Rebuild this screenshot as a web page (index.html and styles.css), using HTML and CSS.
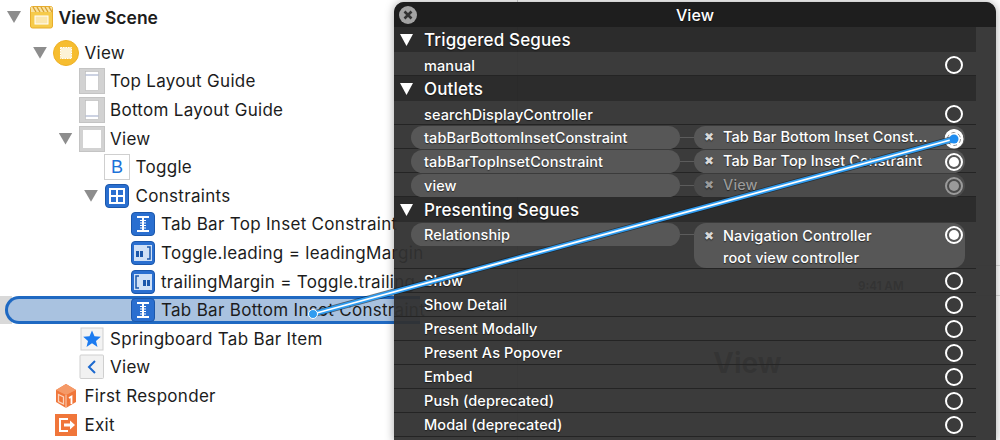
FILE: index.html
```html
<!DOCTYPE html>
<html lang="en">
<head>
<meta charset="utf-8">
<title>View Scene</title>
<link rel="stylesheet" href="styles.css">
</head>
<body>
<main class="stage">
  <div class="canvas">
    <span class="canvas-line"></span>
    <span class="canvas-bar"></span>
    <span class="canvas-time">9:41 AM</span>
    <span class="canvas-title">View</span>
  </div>

  <ul class="tree">
    <li class="node level-0 scene">
      <span class="tri"></span>
      <svg class="ico" viewBox="0 0 26 26"><rect x="3.5" y="2.5" width="22" height="21.5" rx="2" fill="#f6cb4b" stroke="#e8ad2c"/><path d="M4 3h21v5H4z" fill="#f9e3a0"/><path d="M6 3l3 5M10 3l3 5M14 3l3 5M18 3l3 5M22 3l3 5" stroke="#d9a032" stroke-width="1.4"/><rect x="8" y="12" width="13" height="8" fill="#fbe7ae" stroke="#fff"/></svg>
      <span class="label">View Scene</span>
    </li>
    <li class="node level-1">
      <span class="tri"></span>
      <svg class="ico" viewBox="0 0 26 26"><circle cx="13" cy="13" r="12.5" fill="#f6bd30" stroke="#eeb024"/><rect x="7.5" y="7.5" width="11" height="11" fill="#fdf3d6" stroke="#fff" stroke-dasharray="1.5 1"/></svg>
      <span class="label">View</span>
    </li>
    <li class="node level-2">
      <span class="slot"></span>
      <svg class="ico" viewBox="0 0 26 26"><rect x="0.5" y="0.5" width="25" height="25" fill="#d2d2d2" stroke="#c4c4c4"/><rect x="6.5" y="3.5" width="13" height="19" fill="#fff" stroke="#b9b9b9" stroke-width=".6"/><path d="M6.5 7h13" stroke="#a9b4cf" stroke-width="1.2"/></svg>
      <span class="label">Top Layout Guide</span>
    </li>
    <li class="node level-2">
      <span class="slot"></span>
      <svg class="ico" viewBox="0 0 26 26"><rect x="0.5" y="0.5" width="25" height="25" fill="#d2d2d2" stroke="#c4c4c4"/><rect x="6.5" y="3.5" width="13" height="19" fill="#fff" stroke="#b9b9b9" stroke-width=".6"/><path d="M6.5 19h13" stroke="#a9b4cf" stroke-width="1.2"/></svg>
      <span class="label">Bottom Layout Guide</span>
    </li>
    <li class="node level-2">
      <span class="tri"></span>
      <svg class="ico" viewBox="0 0 26 26"><rect x="0.5" y="0.5" width="25" height="25" fill="#d2d2d2" stroke="#c4c4c4"/><rect x="4" y="4" width="18" height="18" fill="#fff"/></svg>
      <span class="label">View</span>
    </li>
    <li class="node level-3">
      <span class="slot"></span>
      <span class="button-ico">B</span>
      <span class="label">Toggle</span>
    </li>
    <li class="node level-3">
      <span class="tri"></span>
      <svg class="ico" viewBox="0 0 26 26"><rect x="1.5" y="1.5" width="23" height="23" rx="3.5" fill="#2a6fd0" stroke="#1b57ab"/><rect x="5" y="5" width="16" height="16" fill="#fff"/><path d="M7 7h5v5H7zM14 7h5v5h-5zM7 14h5v5H7zM14 14h5v5h-5z" fill="#2a6fd0"/></svg>
      <span class="label">Constraints</span>
    </li>
    <li class="node level-4">
      <span class="slot"></span>
      <svg class="ico" viewBox="0 0 26 26"><rect x="1.5" y="1.5" width="23" height="23" rx="3.5" fill="#2a6fd0" stroke="#1b57ab"/><path d="M7 6h12M7 20h12M13 6v14" stroke="#fff" stroke-width="2"/><path d="M10 9.500h6M10 12h6M10 14.500h6M10 17h6" stroke="#fff" stroke-width="1"/></svg>
      <span class="label">Tab Bar Top Inset Constraint</span>
    </li>
    <li class="node level-4">
      <span class="slot"></span>
      <svg class="ico" viewBox="0 0 26 26"><rect x="1.500" y="1.500" width="23" height="23" rx="3.500" fill="#2a6fd0" stroke="#1b57ab"/><rect x="4" y="5" width="18" height="16" fill="#cfe0f6"/><path d="M17 7h3v12h-3" fill="none" stroke="#1b57ab" stroke-width="1.500"/><rect x="6" y="11" width="3" height="6" fill="#1b57ab"/><rect x="10" y="11" width="3" height="6" fill="#1b57ab"/></svg>
      <span class="label">Toggle.leading = leadingMargin</span>
    </li>
    <li class="node level-4">
      <span class="slot"></span>
      <svg class="ico" viewBox="0 0 26 26"><rect x="1.500" y="1.500" width="23" height="23" rx="3.500" fill="#2a6fd0" stroke="#1b57ab"/><rect x="4" y="5" width="18" height="16" fill="#cfe0f6"/><path d="M9 7H6v12h3" fill="none" stroke="#1b57ab" stroke-width="1.500"/><rect x="13" y="11" width="3" height="6" fill="#1b57ab"/><rect x="17" y="11" width="3" height="6" fill="#1b57ab"/></svg>
      <span class="label">trailingMargin = Toggle.trailing</span>
    </li>
    <li class="node level-4 selected">
      <span class="slot"></span>
      <svg class="ico" viewBox="0 0 26 26"><rect x="1.500" y="1.500" width="23" height="23" rx="3.500" fill="#2a6fd0" stroke="#1b57ab"/><path d="M7 6h12M7 20h12M13 6v14" stroke="#fff" stroke-width="2"/><path d="M10 9.500h6M10 12h6M10 14.500h6M10 17h6" stroke="#fff" stroke-width="1"/></svg>
      <span class="label">Tab Bar Bottom Inset Constraint</span>
    </li>
    <li class="node level-2">
      <span class="slot"></span>
      <svg class="ico" viewBox="0 0 26 26"><rect x="2" y="2" width="22" height="22" fill="#f3f3f3" stroke="#cfcfcf"/><path d="M13 4.500l2.500 5.800 6.300.5-4.800 4.100 1.500 6.100L13 17.300l-5.500 3.700L9 14.900l-4.800-4.100 6.300-.5z" fill="#1b7bf0"/></svg>
      <span class="label">Springboard Tab Bar Item</span>
    </li>
    <li class="node level-2">
      <span class="slot"></span>
      <svg class="ico" viewBox="0 0 26 26"><rect x="1" y="1" width="23.500" height="23.500" rx="1" fill="#f1f1f1" stroke="#cfcfcf"/><path d="M16 7l-6 6 6 6" fill="none" stroke="#1c69cf" stroke-width="2"/></svg>
      <span class="label">View</span>
    </li>
    <li class="node level-1">
      <span class="slot"></span>
      <svg class="ico" viewBox="0 0 26 26"><path d="M3 7l10-6 10 6v12l-10 6-10-6z" fill="#f0763a"/><path d="M3 7l10 5 10-5-10-6z" fill="#f59a68"/><path d="M13 12v13" stroke="#fbd3bb"/><path d="M5.500 11.500l5 2.500v7l-5-2.500z" fill="none" stroke="#fbd3bb" stroke-width="1.300"/><path d="M16 15l2.500-1.500v7.500" fill="none" stroke="#fff" stroke-width="1.800"/></svg>
      <span class="label">First Responder</span>
    </li>
    <li class="node level-1">
      <span class="slot"></span>
      <svg class="ico" viewBox="0 0 26 26"><rect x="2" y="2" width="22" height="22" fill="#f0763a"/><path d="M15 7H7v12h8" fill="none" stroke="#fff" stroke-width="2"/><path d="M11 13h7" stroke="#fff" stroke-width="3"/><path d="M17 8.500l5 4.500-5 4.500z" fill="#fff"/></svg>
      <span class="label">Exit</span>
    </li>
  </ul>

  <section class="panel">
    <header class="panel-title">
      <span class="close"><svg viewBox="0 0 18 18"><circle cx="9" cy="9" r="9" fill="#a3a3a3"/><path d="M5.500 5.500l7 7M12.500 5.500l-7 7" stroke="#333" stroke-width="2.600"/></svg></span>
      <span>View</span>
    </header>
    <div class="list">
      <h2 class="section"><span class="tri-w"></span>Triggered Segues</h2>
      <div class="row upper"><span class="name">manual</span><span class="dot"></span></div>

      <h2 class="section"><span class="tri-w"></span>Outlets</h2>
      <div class="row upper"><span class="name">searchDisplayController</span><span class="dot"></span></div>
      <div class="row upper">
        <span class="name pill">tabBarBottomInsetConstraint</span><span class="wire"></span>
        <span class="target"><span class="x">✖</span><span class="t-label">Tab Bar Bottom Inset Const...</span><span class="dot on"></span></span>
      </div>
      <div class="row upper">
        <span class="name pill">tabBarTopInsetConstraint</span><span class="wire"></span>
        <span class="target"><span class="x">✖</span><span class="t-label">Tab Bar Top Inset Constraint</span><span class="dot on"></span></span>
      </div>
      <div class="row upper">
        <span class="name pill">view</span><span class="wire"></span>
        <span class="target dim"><span class="x">✖</span><span class="t-label">View</span><span class="dot on"></span></span>
      </div>

      <h2 class="section"><span class="tri-w"></span>Presenting Segues</h2>
      <div class="row upper tall">
        <span class="name pill">Relationship</span><span class="wire"></span>
        <span class="target two"><span class="x">✖</span><span class="t-label">Navigation Controller<br>root view controller</span><span class="dot on"></span></span>
      </div>
      <div class="row"><span class="name">Show</span><span class="dot"></span></div>
      <div class="row"><span class="name">Show Detail</span><span class="dot"></span></div>
      <div class="row"><span class="name">Present Modally</span><span class="dot"></span></div>
      <div class="row"><span class="name">Present As Popover</span><span class="dot"></span></div>
      <div class="row"><span class="name">Embed</span><span class="dot"></span></div>
      <div class="row"><span class="name">Push (deprecated)</span><span class="dot"></span></div>
      <div class="row"><span class="name">Modal (deprecated)</span><span class="dot"></span></div>
      <div class="row"></div>
    </div>
  </section>

  <svg class="connection" viewBox="0 0 1000 440">
    <circle cx="954" cy="139" r="9.500" fill="#fff"/>
    <circle cx="954" cy="139" r="6.500" fill="none" stroke="#8f8f8f" stroke-width="1" stroke-dasharray="4 2.800"/>
    <path d="M313 314L954 139" stroke="#0d1a26" stroke-opacity=".6" stroke-width="6.500"/>
    <path d="M313 314L954 139" stroke="#2f9cf0" stroke-width="5"/>
    <path d="M313 314L954 139" stroke="#fff" stroke-width="1.800"/>
    <circle cx="313" cy="314" r="4.500" fill="#2f9cf0" stroke="#fff" stroke-width="1"/>
    <circle cx="954" cy="139" r="4.500" fill="#1f8df0"/>
  </svg>
</main>
</body>
</html>
```

FILE: styles.css
```css
* { box-sizing: border-box; }
html, body { margin: 0; padding: 0; background: #fff; }
body { font-family: Inter, "Liberation Sans", sans-serif; color: #1c1c1c; }

.stage { position: relative; width: 1000px; height: 440px; overflow: hidden; }

/* scene canvas lying behind the translucent panel */
.canvas { position: absolute; inset: 0; }
.canvas-line { position: absolute; left: 517px; top: 0; width: 1px; height: 440px; background: #d0d0d0; }
.canvas-bar { position: absolute; left: 517px; right: 0; top: 265px; height: 31px; border: solid #dcdcdc; border-width: 1px 0; }
.canvas-time { position: absolute; left: 858px; top: 279px; font-size: 11.5px; font-weight: 700; color: rgba(0, 0, 0, .6); }
.canvas-title { position: absolute; left: 713px; top: 346px; font-size: 28px; font-weight: 700; color: rgba(0, 0, 0, .55); }

/* outline tree */
.tree { position: relative; width: 420px; list-style: none; margin: 0; padding: 0; white-space: nowrap; font-size: 17px; letter-spacing: .3px; }
.node { display: flex; align-items: center; height: 28.6px; }
.scene { height: 34px; margin-bottom: 4.5px; font-size: 17.5px; font-weight: 600; letter-spacing: 0; }
.level-0 { padding-left: 1px; }
.level-1 { padding-left: 27px; }
.level-2 { padding-left: 52.5px; }
.level-3 { padding-left: 78px; }
.level-4 { padding-left: 103.5px; }

.tri, .slot { flex: none; width: 26px; }
.tri { height: 12px; }
.tri::before {
  content: ""; display: block; width: 14px; height: 12px; margin-left: 6px;
  background: #8d8d8d; clip-path: polygon(0 0, 100% 0, 50% 100%);
}
.ico { flex: none; width: 26px; height: 26px; }
.button-ico {
  flex: none; width: 26px; height: 26px; border: 1px solid #cfcfcf; background: #fff;
  color: #1c72d8; font: 18px/24px "Liberation Sans", sans-serif; text-align: center; letter-spacing: 0;
}
.label { margin-left: 5.5px; }

.selected { position: relative; isolation: isolate; background: linear-gradient(#d9d9d9, #d9d9d9) left / 12px 100% no-repeat; }
.selected::before {
  content: ""; position: absolute; inset: 0 0 0 5px; z-index: -1;
  background: #a9c2e0; border: 3px solid #1f69c2; border-right: 0; border-radius: 14px 0 0 14px;
}

/* connections inspector popover */
.panel {
  position: absolute; left: 394px; top: 2px; width: 602px; height: 440px;
  border-radius: 10px 10px 0 0; overflow: hidden;
  background: rgba(48, 48, 48, .95); color: #fff;
  box-shadow: 0 0 10px rgba(0, 0, 0, .35);
  font-size: 14.5px; letter-spacing: .1px; text-shadow: 0 1px 1px rgba(0, 0, 0, .55);
}
.panel-title {
  position: relative; height: 25px; display: flex; align-items: center; justify-content: center;
  background: #1e1e1e; font-size: 16px; font-weight: 500;
}
.close { position: absolute; left: 5px; top: 4px; width: 18px; height: 18px; }
.close svg { display: block; width: 18px; height: 18px; }

.list { margin-right: 20px; }
.section {
  display: flex; align-items: center; gap: 11px; height: 25px; margin: 0; padding: 1px 0 0 6px;
  background: rgba(0, 0, 0, .25); font-size: 17px; font-weight: 500; letter-spacing: .15px;
}
.tri-w { width: 13px; height: 12px; background: #fff; clip-path: polygon(0 0, 100% 0, 50% 100%); }

.row {
  display: flex; align-items: center; height: 24px; padding: 0 13px 0 17px;
  border-bottom: 1px solid #242424; white-space: nowrap;
}
.row.upper { padding-top: 1px; }
.row.tall { height: 47px; align-items: flex-start; }
.name { width: 269px; height: 23px; line-height: 23px; padding-left: 13px; font-weight: 500; border-radius: 11.500px; }
.upper .name { line-height: 25px; }
.upper .pill { line-height: 24px; }
.pill { background: #575757; }
.wire { width: 14px; height: 1px; background: #5c5c5c; }
.row.tall .wire { margin-top: 11px; }
.target {
  display: flex; align-items: center; width: 271px; height: 23px; margin-right: -13px; padding: 0 2px 0 10px;
  background: #575757; border-radius: 11.500px; font-weight: 500; line-height: 24px;
}
.target.two { height: 45px; align-items: flex-start; padding-top: 2px; line-height: 22px; border-radius: 12px; }
.target.dim { color: #9a9a9a; background: #4b4b4b; }
.x { width: 19px; font-size: 12px; color: #d8d8d8; }
.dim .x { color: #9a9a9a; }
.t-label { flex: 1; overflow: hidden; }
.dot {
  flex: none; position: relative; width: 18px; height: 18px; margin-left: auto;
  border: 2px solid #fff; border-radius: 50%;
}
.upper .dot { top: 1px; }
.dot.on::after {
  content: ""; position: absolute; inset: 2px; border-radius: 50%; background: #fff;
}
.dim .dot { border-color: #9a9a9a; }
.dim .dot.on::after { background: #9a9a9a; }

.connection { position: absolute; left: 0; top: 0; width: 1000px; height: 440px; pointer-events: none; }
```
